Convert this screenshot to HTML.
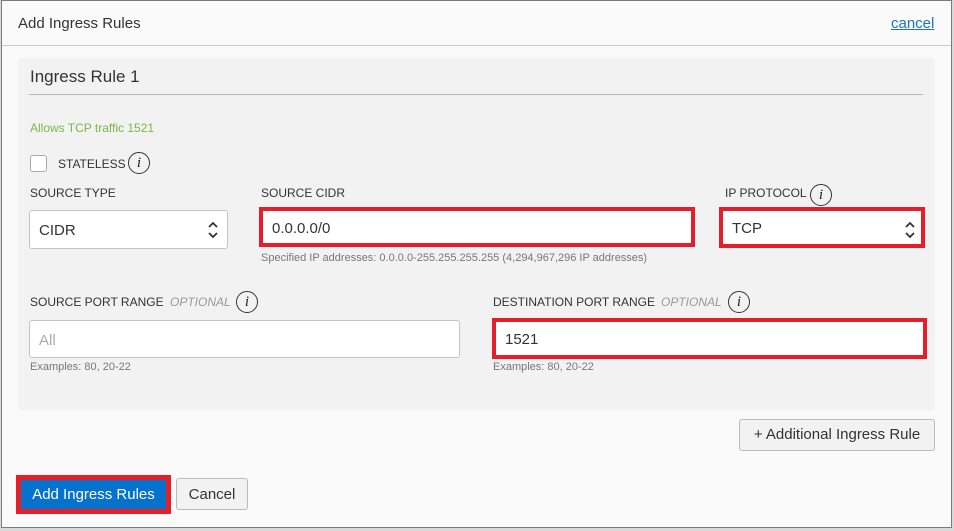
<!DOCTYPE html>
<html><head><style>
*{box-sizing:border-box;margin:0;padding:0}
body{width:954px;height:531px;background:#d8d8d8;font-family:"Liberation Sans",sans-serif;position:relative;overflow:hidden}
.a{position:absolute}
.dlg{left:1px;top:0;width:951px;height:528px;background:#fafafa;border:1px solid #7a7a7a}
.lbl{font-size:12px;color:#333}
.opt{font-size:12px;color:#999;font-style:italic}
.info{width:22px;height:22px;border:1.5px solid #333;border-radius:50%;text-align:center;font:italic 15px/20px "Liberation Serif",serif;color:#222}
.inp{background:#fff;border:1px solid #c4c4c4;border-radius:3px;font-size:15px;color:#333;padding-left:9px;padding-top:2px;display:flex;align-items:center}
.red{border:4px solid #e51f2a;border-radius:0}
.help{font-size:11px;color:#777}
</style></head><body>
<div class="a dlg"></div>
<div class="a" style="left:18px;top:15px;font-size:15px;color:#333">Add Ingress Rules</div>
<div class="a" style="left:891px;top:15px;font-size:15px;color:#1a73c9;text-decoration:underline">cancel</div>
<div class="a" style="left:2px;top:45px;width:949px;height:1px;background:#c8c8c8"></div>
<div class="a" style="left:18px;top:58px;width:917px;height:352px;background:#f2f2f2;border-radius:4px"></div>
<div class="a" style="left:30px;top:67px;font-size:17px;color:#333">Ingress Rule 1</div>
<div class="a" style="left:29px;top:94px;width:894px;height:1px;background:#b8b8b8"></div>
<div class="a" style="left:30px;top:121px;font-size:12px;color:#7ab648">Allows TCP traffic 1521</div>
<div class="a" style="left:30px;top:155px;width:17px;height:17px;background:#fff;border:1px solid #aaa;border-radius:3px"></div>
<div class="a lbl" style="left:58px;top:157px">STATELESS</div>
<div class="a info" style="left:128px;top:152px">i</div>
<div class="a lbl" style="left:30px;top:186px">SOURCE TYPE</div>
<div class="a lbl" style="left:261px;top:186px">SOURCE CIDR</div>
<div class="a lbl" style="left:725px;top:186px">IP PROTOCOL</div>
<div class="a info" style="left:810px;top:184px">i</div>
<div class="a inp" style="left:29px;top:210px;width:199px;height:39px">CIDR</div>
<svg class="a" style="left:207px;top:220px" width="12" height="20"><path d="M2 7l4-4 4 4M2 13l4 4 4-4" fill="none" stroke="#333" stroke-width="1.8"/></svg>
<div class="a inp red" style="left:259px;top:207px;width:436px;height:40px">0.0.0.0/0</div>
<div class="a help" style="left:261px;top:252px">Specified IP addresses: 0.0.0.0-255.255.255.255 (4,294,967,296 IP addresses)</div>
<div class="a inp red" style="left:719px;top:207px;width:206px;height:41px">TCP</div>
<svg class="a" style="left:904px;top:220px" width="12" height="20"><path d="M2 7l4-4 4 4M2 13l4 4 4-4" fill="none" stroke="#333" stroke-width="1.8"/></svg>
<div class="a lbl" style="left:30px;top:295px">SOURCE PORT RANGE</div>
<div class="a opt" style="left:170px;top:295px">OPTIONAL</div>
<div class="a info" style="left:236px;top:291px">i</div>
<div class="a lbl" style="left:493px;top:295px">DESTINATION PORT RANGE</div>
<div class="a opt" style="left:661px;top:295px">OPTIONAL</div>
<div class="a info" style="left:728px;top:291px">i</div>
<div class="a inp" style="left:29px;top:320px;width:431px;height:38px;color:#aaa">All</div>
<div class="a inp red" style="left:492px;top:318px;width:435px;height:41px">1521</div>
<div class="a help" style="left:30px;top:361px">Examples: 80, 20-22</div>
<div class="a help" style="left:493px;top:361px">Examples: 80, 20-22</div>
<div class="a" style="left:739px;top:419px;width:196px;height:32px;background:#f2f2f2;border:1px solid #bbb;border-radius:3px;font-size:15px;color:#333;text-align:center;line-height:30px">+ Additional Ingress Rule</div>
<div class="a" style="left:16px;top:475px;width:155px;height:39px;border:5px solid #e51f2a;background:#0572ce;color:#fff;font-size:15px;text-align:center;line-height:29px">Add Ingress Rules</div>
<div class="a" style="left:176px;top:478px;width:72px;height:32px;background:#f2f2f2;border:1px solid #bbb;border-radius:3px;font-size:15px;color:#333;text-align:center;line-height:31px">Cancel</div>
</body></html>
